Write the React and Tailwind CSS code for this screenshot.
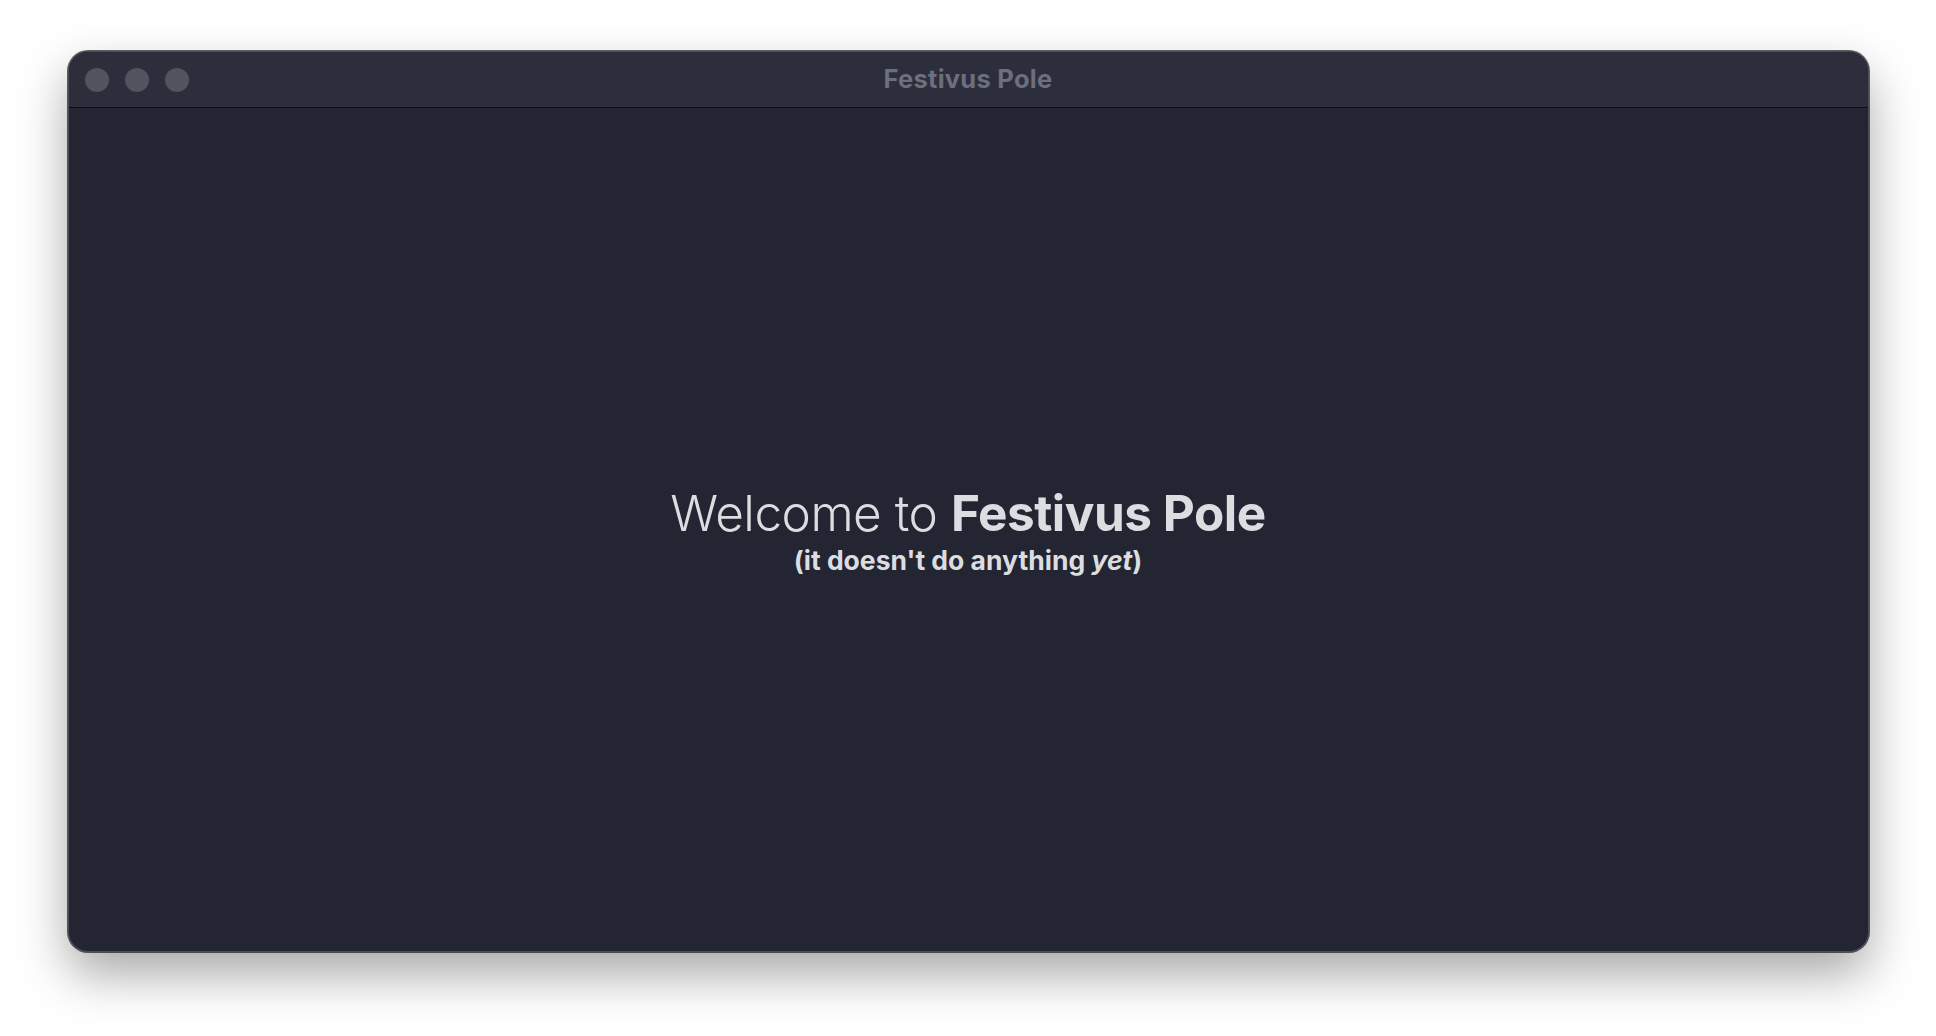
export default function App() {
  return (
    <div className="w-[1936px] h-[1036px] bg-white flex justify-center pt-[51px] overflow-hidden">
      {/* Ventana */}
      <div className="w-[1801px] h-[901px] flex flex-col rounded-[20px] overflow-hidden bg-[#232532] border border-[#4a4c58] shadow-[0_22px_50px_rgba(0,0,0,0.35),0_0_0_1px_rgba(0,0,0,0.6)]">
        {/* Barra de título */}
        <div className="relative h-[56px] shrink-0 bg-[#2c2e3b] border-b border-[#0d0e13] flex items-center">
          <div className="flex gap-4 pl-[16px]">
            <span className="w-6 h-6 rounded-full bg-[#51535f]" />
            <span className="w-6 h-6 rounded-full bg-[#51535f]" />
            <span className="w-6 h-6 rounded-full bg-[#51535f]" />
          </div>
          <div className="absolute inset-0 flex items-center justify-center font-['Inter',sans-serif] font-bold text-[25.5px] text-[#6c6f7d] tracking-[0.01em]">
            Festivus Pole
          </div>
        </div>

        {/* Contenido */}
        <div className="flex-1 flex flex-col items-center justify-center font-['Inter',sans-serif] text-[#dcdde0]">
          <h1 className="text-[49.5px] leading-[58px] tracking-[-0.01em]">
            <span className="font-light">Welcome to </span>
            <span className="font-bold">Festivus Pole</span>
          </h1>
          <p className="text-[26.5px] leading-[30px] font-bold mt-[3px]">
            (it doesn't do anything <em className="italic">yet</em>)
          </p>
        </div>
      </div>
    </div>
  );
}
